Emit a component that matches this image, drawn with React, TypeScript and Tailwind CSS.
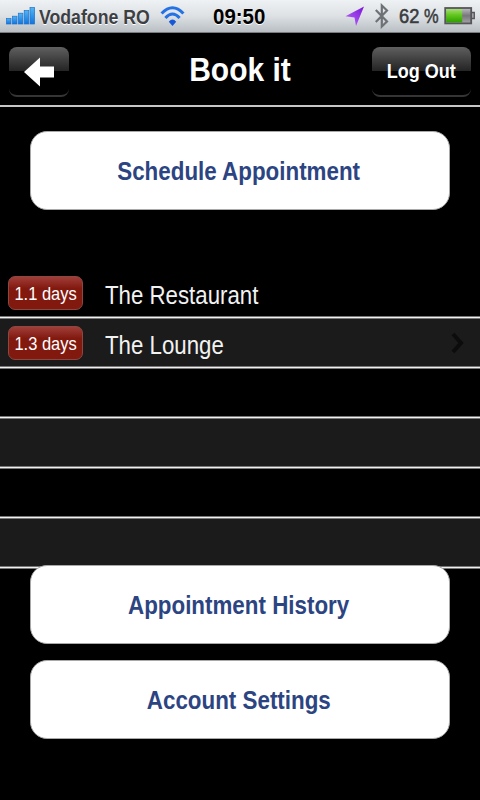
import type { ReactNode } from "react";
import clsx from "clsx";

type Venue = {
  name: string;
  wait: string;
  hasDetail?: boolean;
};

const venues: (Venue | null)[] = [
  { name: "The Restaurant", wait: "1.1 days" },
  { name: "The Lounge", wait: "1.3 days", hasDetail: true },
  null,
  null,
  null,
  null,
];

function StatusBar() {
  return (
    <header className="flex h-[33px] items-start border-b border-[#777c80] bg-linear-to-b from-[#eef2f4] via-[#dde1e4] to-[#b9bfc4] font-bold">
      <svg className="ml-[6px] mt-[7px] shrink-0" width="29" height="18" viewBox="0 0 29 18">
        <defs>
          <linearGradient id="signal" x1="0" y1="0" x2="0" y2="1">
            <stop offset="0" stopColor="#53b5f2" />
            <stop offset="1" stopColor="#1273dc" />
          </linearGradient>
        </defs>
        <g fill="url(#signal)" stroke="#1d74ce" strokeWidth="0.7">
          <rect x="0.4" y="11.4" width="4.6" height="5.6" />
          <rect x="6.4" y="9.2" width="4.6" height="7.8" />
          <rect x="12.3" y="6.2" width="4.6" height="10.8" />
          <rect x="18.2" y="3.5" width="4.6" height="13.5" />
          <rect x="24" y="0.5" width="4.6" height="16.5" />
        </g>
      </svg>
      <span className="ml-[4px] mt-[5px] w-[121px] origin-left scale-x-[0.843] whitespace-nowrap text-[21px] leading-6 text-[#3d4043] [text-shadow:0_1px_0_#fff]">
        Vodafone RO
      </span>
      <svg className="mt-[6px] shrink-0" width="25" height="21" viewBox="0 0 25 21">
        <g fill="none" stroke="#2472e4" strokeWidth="3">
          <path d="M1.6 7.6Q12.5 -4.2 23.4 7.6" />
          <path d="M5.4 12Q12.5 4 19.6 12" />
        </g>
        <path d="M8.8 15.8Q12.5 11.2 16.2 15.8L12.5 20Z" fill="#1559da" />
      </svg>
      <span className="ml-[28px] mt-[5px] w-[131px] origin-left scale-x-[0.93] text-[22px] leading-6 text-black [text-shadow:0_1px_0_#fff]">
        09:50
      </span>
      <svg className="mt-[6px] shrink-0" width="22" height="21" viewBox="0 0 22 21">
        <defs>
          <linearGradient id="location" x1="0" y1="1" x2="1" y2="0">
            <stop offset="0" stopColor="#bd6cff" />
            <stop offset="1" stopColor="#7a16d4" />
          </linearGradient>
        </defs>
        <path d="M20 0.5L1.5 10.2L10.5 11.6L12 20Z" fill="url(#location)" />
      </svg>
      <svg className="ml-[8px] mt-[3px] shrink-0" width="16" height="26" viewBox="0 0 16 26">
        <path
          d="M1.8 7L13 18.5L7.8 23.5V2.5L13 7.5L1.8 19"
          fill="none"
          stroke="#6e7276"
          strokeWidth="2.2"
        />
      </svg>
      <span className="ml-[9px] mt-[4px] w-[25px] origin-left scale-x-[0.87] text-[21px] font-normal leading-6 text-[#383b3e] [-webkit-text-stroke:0.6px_#383b3e]">
        62
      </span>
      <span className="mt-[4px] w-[20px] origin-left scale-x-[0.82] text-[20px] font-normal leading-6 text-[#383b3e] [-webkit-text-stroke:0.5px_#383b3e]">
        %
      </span>
      <svg className="mt-[7px] shrink-0" width="32" height="18" viewBox="0 0 32 18">
        <defs>
          <linearGradient id="charge" x1="0" y1="0" x2="0" y2="1">
            <stop offset="0" stopColor="#a4dc78" />
            <stop offset="0.45" stopColor="#62c71d" />
            <stop offset="1" stopColor="#2d9e00" />
          </linearGradient>
          <linearGradient id="drained" x1="0" y1="0" x2="0" y2="1">
            <stop offset="0" stopColor="#c0c0c4" />
            <stop offset="0.5" stopColor="#77777b" />
            <stop offset="1" stopColor="#a5a5a9" />
          </linearGradient>
        </defs>
        <rect x="1.2" y="1" width="26" height="15.4" fill="url(#drained)" stroke="#56565a" strokeWidth="1.8" />
        <rect x="2.2" y="2" width="16" height="13.4" fill="url(#charge)" />
        <path d="M28 5.5H30.3V11.5H28" fill="#a5a5a9" stroke="#56565a" strokeWidth="1.3" />
      </svg>
    </header>
  );
}

function NavButton({ className, label, children }: { className: string; label: string; children: ReactNode }) {
  return (
    <button
      type="button"
      aria-label={label}
      className={clsx(
        "mt-[14px] flex h-[50px] items-center justify-center rounded-[8px] border-b-2 border-[#353535] bg-linear-to-b from-[#606060] from-0% via-[#242424] via-50% to-black to-50%",
        className,
      )}
    >
      {children}
    </button>
  );
}

function NavBar() {
  return (
    <nav className="grid h-[74px] grid-cols-[120px_1fr_120px] items-start border-b-2 border-[#c6c6c6] bg-black">
      <NavButton className="ml-[9px] w-[60px]" label="Back">
        <svg width="32" height="30" viewBox="0 0 32 30" className="mt-[2px]">
          <path d="M1 15L17 0.5V9.5H31V20.5H17V29.5Z" fill="#fff" />
        </svg>
      </NavButton>
      <h1 className="mt-[17px] scale-x-90 text-center text-[33.3px] font-bold leading-[40px] text-white">
        Book it
      </h1>
      <NavButton className="ml-[12px] w-[99px]" label="Log Out">
        <span className="scale-x-90 whitespace-nowrap text-[20px] font-bold leading-6 text-white">
          Log Out
        </span>
      </NavButton>
    </nav>
  );
}

function MenuButton({ className, children }: { className?: string; children: ReactNode }) {
  return (
    <button
      type="button"
      className={clsx(
        "relative mx-[30px] flex h-[79px] items-center justify-center rounded-[17px] border border-[#a9a9a9] bg-white pr-[2px] pt-px",
        className,
      )}
    >
      <span className="scale-x-[0.895] whitespace-nowrap text-[25px] font-bold leading-7 text-[#2c4582]">
        {children}
      </span>
    </button>
  );
}

function VenueRow({ venue, shaded }: { venue: Venue | null; shaded: boolean }) {
  return (
    <li
      className={clsx(
        "flex h-[50px] items-start border-b border-t border-b-[#f0f0f0] border-t-[#777] pl-[8px] shadow-[inset_0_-1px_0_#777] first:border-t-black",
        shaded ? "bg-[#1b1b1b]" : "bg-black",
      )}
    >
      {venue && (
        <>
          <span className="mt-[7px] flex h-[34px] w-[75px] items-center justify-center rounded-[7px] border border-[#8d4742] bg-linear-to-b from-[#a03d37] to-[#82190f] to-35%">
            <span className="mt-px scale-x-90 whitespace-nowrap text-[18.3px] leading-5 text-white">
              {venue.wait}
            </span>
          </span>
          <span className="ml-[22px] mt-[12px] origin-left scale-x-[0.89] whitespace-nowrap text-[25px] leading-7 text-[#f2f2f2]">
            {venue.name}
          </span>
          {venue.hasDetail && (
            <svg className="ml-auto mr-[14px] mt-[13px]" width="16" height="22" viewBox="0 0 16 22">
              <path d="M3 2L11 11L3 20" fill="none" stroke="#0c0c0c" strokeWidth="4" />
            </svg>
          )}
        </>
      )}
    </li>
  );
}

export default function App() {
  return (
    <main className="h-[800px] w-[480px] overflow-hidden bg-black font-['Liberation_Sans',Arial,sans-serif]">
      <StatusBar />
      <NavBar />
      <div className="flex flex-col">
        <MenuButton className="mt-[24px]">Schedule Appointment</MenuButton>
        <ul className="mt-[58px] border-b border-[#777]">
          {venues.map((venue, i) => (
            <VenueRow key={i} venue={venue} shaded={i % 2 === 1} />
          ))}
        </ul>
        <MenuButton className="-mt-[4px]">Appointment History</MenuButton>
        <MenuButton className="mt-[16px]">Account Settings</MenuButton>
      </div>
    </main>
  );
}
